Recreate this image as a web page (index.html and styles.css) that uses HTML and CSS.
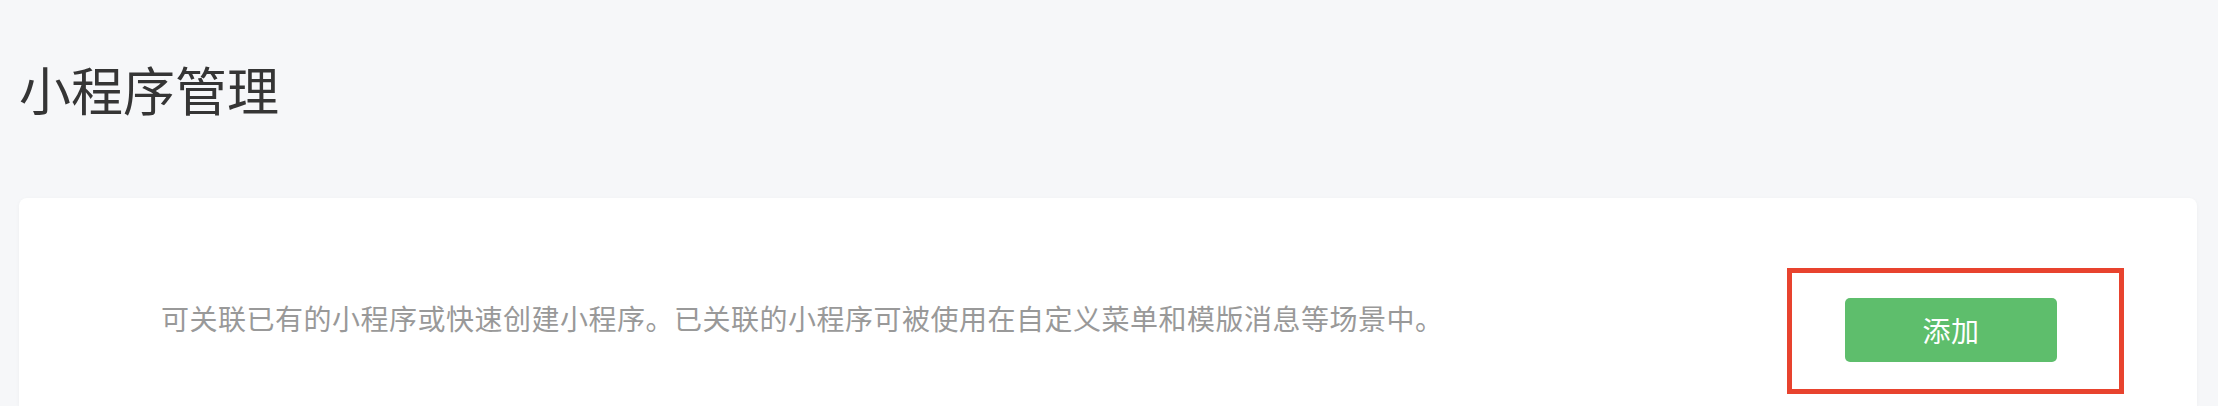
FILE: index.html
```html
<!DOCTYPE html>
<html lang="zh-CN">
<head>
<meta charset="utf-8">
<title>小程序管理</title>
<link rel="stylesheet" href="styles.css">
</head>
<body>
<div class="page">
  <h1 class="title">小程序管理</h1>
  <div class="card">
    <p class="desc">可关联已有的小程序或快速创建小程序。已关联的小程序可被使用在自定义菜单和模版消息等场景中。</p>
    <div class="action">
      <button class="btn-add" type="button">添加</button>
      <span class="highlight"></span>
    </div>
  </div>
</div>
</body>
</html>
```

FILE: styles.css
```css
html, body {
  margin: 0;
  padding: 0;
  background: #f6f7f9;
  font-family: "Noto Sans CJK SC", "Noto Sans", sans-serif;
}

.page {
  padding: 0 21px 0 19px;
}

.title {
  margin: 53px 0 0 0;
  font-size: 52px;
  line-height: 72px;
  font-weight: 400;
  color: #353535;
}

.card {
  margin-top: 73px;
  background: #ffffff;
  border-radius: 8px 8px 0 0;
  box-shadow: 0 1px 4px rgba(0, 0, 0, 0.04);
  padding: 100px 140px 44px 142px;
  display: flex;
  align-items: center;
  justify-content: space-between;
}

.desc {
  margin: 0 0 24px 0;
  font-size: 28px;
  line-height: 40px;
  letter-spacing: 0.5px;
  color: #999999;
}

.action {
  position: relative;
  display: flex;
}

.btn-add {
  width: 212px;
  height: 64px;
  border: 0;
  border-radius: 5px;
  background: #5ebe6c;
  color: #ffffff;
  font-family: "Noto Sans CJK SC", "Noto Sans", sans-serif;
  font-size: 28px;
  letter-spacing: 0.5px;
  padding: 0;
}

.highlight {
  position: absolute;
  left: -58px;
  top: -30px;
  width: 337px;
  height: 126px;
  box-sizing: border-box;
  border: 5px solid #e8432e;
  pointer-events: none;
}
```
